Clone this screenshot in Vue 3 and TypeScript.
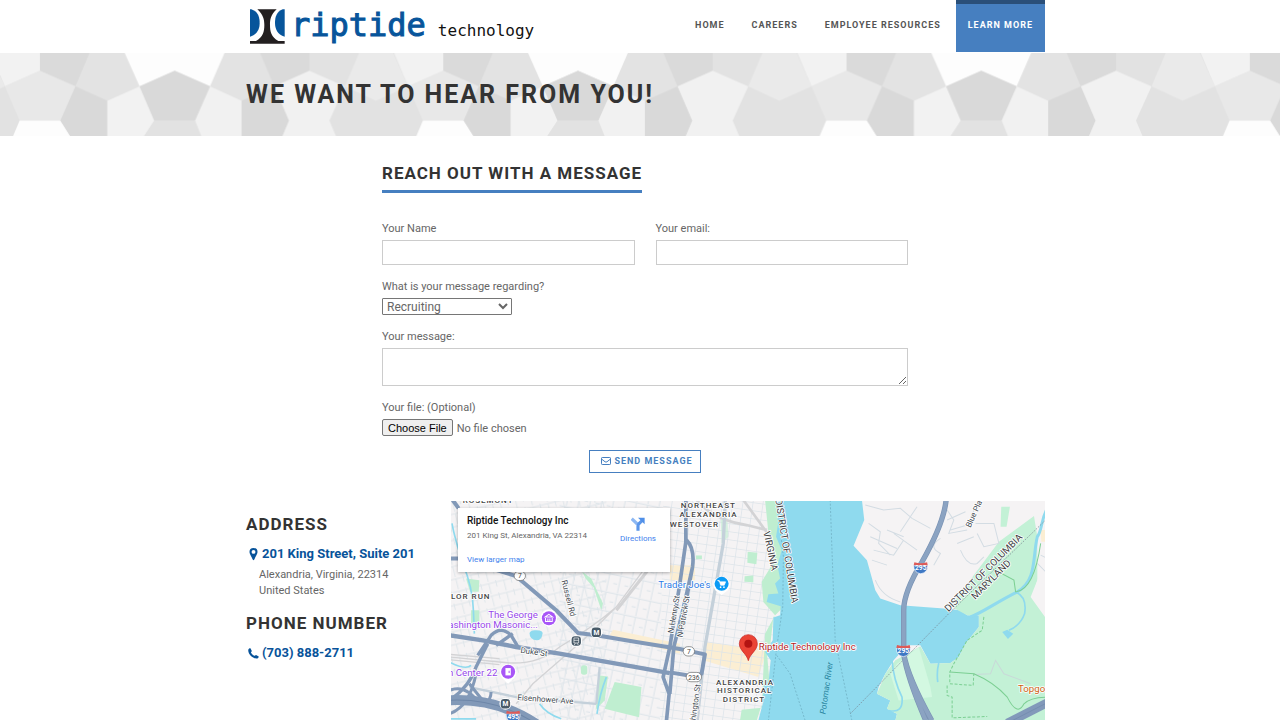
<script setup lang="ts">
import { ref } from 'vue'

interface NavItem {
  label: string
  active?: boolean
}

interface Tile {
  points: string
  fill: string
}

const navItems: NavItem[] = [
  { label: 'Home' },
  { label: 'Careers' },
  { label: 'Employee Resources' },
  { label: 'Learn More', active: true },
]

const topics: string[] = ['Recruiting', 'Teaming Opportunities', 'General']

const name = ref('')
const email = ref('')
const topic = ref('Recruiting')
const message = ref('')

const tiles: Tile[] = [
  { points: '-25,0 98,0 98,60 12,107', fill: '#f2f2f2' },
  { points: '963,0 1087,0 1087,60 1000,107', fill: '#f2f2f2' },
  { points: '98,0 222,0 185,107 98,60', fill: '#dadada' },
  { points: '222,0 303,0 342,107 263,150 185,107', fill: '#e3e3e3' },
  { points: '303,0 553,0 515,107 428,60 342,107', fill: '#fdfdfd' },
  { points: '553,0 635,0 672,107 592,150 515,107', fill: '#e3e3e3' },
  { points: '635,0 758,0 758,60 672,107', fill: '#dadada' },
  { points: '758,0 882,0 845,107 758,60', fill: '#e2e2e2' },
  { points: '882,0 961,0 1000,107 921,150 845,107', fill: '#eaeaea' },
  { points: '-106,0 -27,0 12,107 -67,150 -143,107', fill: '#eaeaea' },
  { points: '98,60 185,107 148,210 48,210 12,107', fill: '#e8e8e8' },
  { points: '48,210 148,210 175,262 30,262', fill: '#fdfdfd' },
  { points: '185,107 263,150 263,262 175,262 148,210', fill: '#d9d9d9' },
  { points: '342,107 378,210 350,262 263,262 263,150', fill: '#f2f2f2' },
  { points: '428,60 515,107 478,210 378,210 342,107', fill: '#d9d9d9' },
  { points: '378,210 478,210 495,262 350,262', fill: '#e2e2e2' },
  { points: '515,107 592,150 592,262 495,262 478,210', fill: '#f1f1f1' },
  { points: '592,150 672,107 708,210 690,262 592,262', fill: '#d9d9d9' },
  { points: '758,60 845,107 807,210 825,262 690,262 708,210 672,107', fill: '#f1f1f1' },
]
</script>

<template>
  <div class="page">
    <header class="wrap header">
      <a class="logo" href="#" aria-label="riptide technology">
        <svg class="mark" viewBox="0 0 105 105" aria-hidden="true">
          <path d="M22 1H80C62 18 60 32 60 48C60 68 64 84 85 96H104V104H0V96H18C39 84 43 68 43 48C43 32 40 18 22 1Z" fill="#231f20" />
          <path d="M0 1H4C24 8 29 24 29 42C29 60 22 76 0 83Z" fill="#07559b" />
          <path d="M104 1H98C80 8 75 24 75 42C75 60 82 76 104 83Z" fill="#07559b" />
        </svg>
        <span class="brand">riptide</span>
        <span class="sub">technology</span>
      </a>
      <nav class="nav">
        <a v-for="item in navItems" :key="item.label" href="#" :class="{ active: item.active }">{{ item.label }}</a>
      </nav>
    </header>

    <section class="hero">
      <svg class="hero-bg" aria-hidden="true">
        <defs>
          <pattern id="facets" width="988" height="262" patternUnits="userSpaceOnUse" patternTransform="scale(0.4082 0.3333) translate(0 -7)">
            <rect width="988" height="262" fill="#e2e2e2" />
            <polygon v-for="(t, i) in tiles" :key="i" :points="t.points" :fill="t.fill" />
          </pattern>
        </defs>
        <rect width="100%" height="100%" fill="url(#facets)" />
      </svg>
      <div class="wrap"><h1>We want to hear from you!</h1></div>
    </section>

    <main>
      <form class="form" @submit.prevent>
        <h2 class="form-title">Reach out with a message</h2>
        <div class="row">
          <div class="field">
            <label for="name">Your Name</label>
            <input id="name" v-model="name" class="box" type="text" />
          </div>
          <div class="field">
            <label for="email">Your email:</label>
            <input id="email" v-model="email" class="box" type="email" />
          </div>
        </div>
        <div class="field">
          <label for="topic">What is your message regarding?</label>
          <select id="topic" v-model="topic">
            <option v-for="t in topics" :key="t">{{ t }}</option>
          </select>
        </div>
        <div class="field">
          <label for="message">Your message:</label>
          <textarea id="message" v-model="message" class="box"></textarea>
        </div>
        <div class="field">
          <label for="file">Your file: (Optional)</label>
          <input id="file" type="file" />
        </div>
        <button class="send" type="submit">
          <svg viewBox="0 0 20 16" aria-hidden="true">
            <rect x="1" y="1" width="18" height="14" rx="1.5" />
            <path d="M1 4L8 9.5Q10 11 12 9.5L19 4" />
          </svg>
          Send Message
        </button>
      </form>

      <section class="wrap contact">
        <aside class="details">
          <h2>Address</h2>
          <a class="lead" href="#">
            <svg viewBox="0 0 12 16" aria-hidden="true">
              <path fill-rule="evenodd" d="M6 1A4.6 4.6 0 0 0 1.4 5.6C1.4 8 3.6 10.500 5.100 14.400Q6 16 6.900 14.400C8.400 10.500 10.600 8 10.600 5.600A4.600 4.600 0 0 0 6 1ZM6 3.400A2.200 2.200 0 1 1 6 7.800A2.200 2.200 0 1 1 6 3.400Z" />
            </svg>
            201 King Street, Suite 201
          </a>
          <p>Alexandria, Virginia, 22314<br />United States</p>
          <h2>Phone Number</h2>
          <a class="lead" href="tel:7038882711">
            <svg viewBox="0 0 12 16" aria-hidden="true">
              <path d="M0 4.500C0.200 3 1.600 2.300 2.500 2.500L4.100 5.600C4 6.500 3 6.800 3.100 7.500C3.900 9.200 5.400 10.600 7 11.200C7.800 11.200 8 10.200 8.900 10.200L12 11.900C12 13 11 14.300 9.300 14.300C4.800 14.300 -0.300 9.200 0 4.500Z" />
            </svg>
            (703) 888-2711
          </a>
        </aside>

        <div class="map">
          <svg class="map-art" viewBox="3 3 1782 657" preserveAspectRatio="xMidYMin slice" role="img" aria-label="Map of Alexandria">
            <defs>
              <pattern id="grid-town" width="30" height="24" patternUnits="userSpaceOnUse" patternTransform="rotate(8)">
                <path d="M0 0H30M0 0V24" stroke="#dbe3e9" stroke-width="4" fill="none" />
              </pattern>
              <pattern id="grid-west" width="46" height="38" patternUnits="userSpaceOnUse" patternTransform="rotate(-14)">
                <path d="M0 6H46M8 6V38M30 0V20" stroke="#dfe6ea" stroke-width="3" fill="none" />
              </pattern>
              <pattern id="grid-mid" width="34" height="56" patternUnits="userSpaceOnUse" patternTransform="rotate(12)">
                <path d="M0 4H34M6 4V56M22 30H34" stroke="#dce4e9" stroke-width="3" fill="none" />
              </pattern>
              <g id="shield">
                <path d="M-21 -8H21Q22 14 0 18Q-22 14 -21 -8Z" fill="#3f78c4" stroke="#fff" stroke-width="2" />
                <path d="M-19 -17Q0 -11 19 -17L21 -8H-21Z" fill="#de5b58" />
              </g>
              <g id="metro">
                <circle r="18" fill="#fff" />
                <rect x="-14" y="-14" width="28" height="28" rx="10" fill="#485a68" />
              </g>
            </defs>

            <rect width="1800" height="670" fill="#f5f3f4" />
            <rect width="470" height="660" fill="url(#grid-west)" />
            <rect x="330" width="340" height="660" fill="url(#grid-mid)" />
            <path d="M640 0H945L980 300L960 660H630Z" fill="#f5f3f4" />
            <path d="M490 388L690 430V460L480 405Z" fill="#fbeed3" />
            <path d="M660 195H735V240H660ZM765 425L950 450L925 530L760 480Z" fill="#fbeed3" />
            <path d="M640 0H945L980 300L960 660H630Z" fill="url(#grid-town)" />

            <g fill="#bfeed0">
              <path d="M495 545L575 560L568 650L465 625Z" />
              <path d="M450 525L475 528L465 600L438 628Z" />
              <rect x="394" y="495" width="19" height="28" rx="8" />
              <path d="M50 235L90 240L88 275H62Z" />
              <rect x="65" y="330" width="25" height="50" />
              <path d="M398 215L425 235L460 310L455 330L432 262L408 235Z" />
              <path d="M893 155L922 158L919 192L892 188ZM884 228L910 226V246L883 245Z" />
              <rect x="738" y="166" width="18" height="11" />
              <path d="M945 0H985L995 120L1000 320L970 350L960 440L950 450L958 540L920 660H870L875 628L935 622L945 400L975 345L940 305L935 245L965 195Z" />
              <path d="M812 50H832L835 110L815 130Z" opacity="0.6" />
            </g>

            <!-- Potomac -->
            <path
              d="M978 0L984 70L978 110L995 150L982 195L990 235L975 250L985 280L955 282L950 305L992 318L990 345L970 352L968 420L945 455L962 480L956 540L942 555L938 610L925 660H1335L1340 640L1310 625L1320 600L1280 580L1285 560L1305 520L1330 480L1370 435H1410L1440 490L1500 488L1525 470L1545 430L1585 380V345H1550L1530 330L1480 325L1350 315L1290 295L1275 270L1250 180L1210 137L1242 60L1235 0Z"
              fill="#8fdaee"
            />

            <g transform="translate(1200)">
              <path d="M210 438L240 490L300 488L325 470L345 430L385 380V345L350 345L300 318L445 125L550 48L560 110V240L540 290L590 360V660H135L140 640L110 625L120 600L80 580L105 520L135 480Z" fill="#c3f1d6" />
              <path d="M205 440L240 560L245 590L145 600L120 520L140 490Z" fill="#d3f8e1" />
              <path d="M452 20H478L468 80H450Z" fill="#c3f1d6" />
              <path d="M560 240L590 160V350L545 292Z" fill="#f5f3f4" />
              <path d="M570 90H590V125H572Z" fill="#fbeed3" />
              <path d="M360 350C400 335 430 310 500 275C560 240 545 170 560 110C575 90 570 60 590 25" fill="none" stroke="#8fdaee" stroke-width="9" />
              <path d="M495 275Q530 290 522 340Q510 375 475 390M125 480Q130 540 155 590Q160 640 115 630M265 488Q258 515 262 545" fill="none" stroke="#8fdaee" stroke-width="5" />
              <path d="M455 395L470 388L488 400L472 416Z" fill="#8fdaee" />
              <g fill="none" stroke="#d3dce3" stroke-width="3">
                <path d="M45 15L100 30L150 25L185 55L240 85M55 70L90 95L85 130L120 165M70 150L130 165L160 120M65 180L110 195M75 240Q95 290 150 305M130 100L200 150M150 95L200 20M110 90L160 110M270 115Q230 140 270 160L250 195M290 60L345 35M300 90L350 75L385 0M320 130L370 110M330 150Q350 200 380 190L400 170M375 70L430 70L445 130L400 140L380 100M60 110L140 145M290 30L310 60L295 100L350 90" />
                <path d="M370 522L420 520L435 480L460 520L540 550" stroke="#c9d9d8" />
                <path d="M560 190L590 220M570 165L590 175" />
              </g>
              <g fill="none" stroke="#7ccf93" stroke-width="3">
                <path d="M425 205L490 240L495 275Q550 270 570 130M298 515L370 520Q430 545 470 590Q500 650 520 610Q540 590 590 590" />
                <path d="M400 350L395 390L350 420L310 490L298 515V550L368 555L370 520M290 555V585L305 590V652L410 648" stroke-dasharray="9 5" />
              </g>
              <path d="M0 640L300 335L590 55" fill="none" stroke="#777f8c" stroke-width="2" stroke-dasharray="5 4" />
              <g fill="none">
                <path d="M287 0Q280 70 215 185Q160 275 160 330V460Q170 530 226 660M160 460Q172 530 244 660" stroke="#7b93b4" stroke-width="16" />
                <path d="M287 0Q280 70 215 185Q160 275 160 330V460Q170 530 226 660M160 460Q172 530 244 660" stroke="#8ba3c2" stroke-width="12" />
                <path d="M470 668L595 604" stroke="#8299ba" stroke-width="26" />
                <path d="M470 668L595 604" stroke="#6f88ab" stroke-width="2" />
              </g>
            </g>

            <path d="M980 0L1000 170L998 320L980 440L955 660M1140 0L1155 420L1205 660M980 465L1020 520L1065 660" fill="none" stroke="#6ba9bd" stroke-width="2" stroke-dasharray="6 5" />
            <!-- Rail -->
            <g fill="none" stroke="#d3d3d5">
              <path d="M0 470L150 485Q260 500 330 440Q430 380 500 320L640 130M0 478L150 493M0 462L150 475M200 610L250 550L400 420L510 310" stroke-width="4" />
              <path d="M500 330L650 140" stroke-width="9" />
              <path d="M740 0Q790 60 890 75L950 90M880 0L960 110" stroke-width="8" />
            </g>
            <path d="M8 70Q15 110 40 190Q70 260 72 330L75 400M0 485Q50 510 65 495M270 610Q290 640 335 655M470 530Q450 580 442 640M0 655H80" fill="none" stroke="#8fdaee" stroke-width="5" />
            <path d="M240 398Q245 388 260 390Q285 390 278 405Q275 420 262 420Q240 418 240 398Z" fill="#8fdaee" />

            <!-- Roads -->
            <g fill="none" stroke="#c4d0da">
              <path d="M826 0L820 130L790 300L765 440L742 660" stroke-width="10" />
              <path d="M60 560L200 590L440 610M440 610L450 500" stroke-width="7" />
            </g>
            <g fill="none" stroke="#8299b8" stroke-linejoin="round">
              <path d="M0 175H30L200 228L320 330L385 398L440 405L560 425L690 446L765 462L755 520L735 528L660 516" stroke-width="12" />
              <path d="M0 405L100 420L200 440L330 460L500 490L660 518" stroke-width="13" />
              <path d="M10 0L28 25" stroke-width="12" />
              <path d="M708 0V125L690 250L660 440L640 530L658 580L650 660M710 120Q735 145 728 200L690 400M728 200Q700 330 672 440L660 580" stroke-width="11" />
              <path d="M85 465L125 405Q155 375 185 405L207 442M140 435L190 400M115 430L80 500Q60 560 0 600" stroke-width="10" />
              <path d="M-10 600Q140 590 260 670" stroke-width="30" />
              <path d="M0 570Q50 550 90 610M60 550L100 600M0 640Q60 620 80 520M125 575Q125 600 105 610" stroke-width="9" />
            </g>
            <path d="M-10 600Q140 590 260 670" fill="none" stroke="#6d86a8" stroke-width="3" />

            <!-- Route markers -->
            <g class="route">
              <rect x="194" y="213" width="34" height="28" rx="14" /><text x="211" y="235">7</text>
              <rect x="700" y="439" width="34" height="28" rx="14" /><text x="717" y="461">7</text>
              <rect x="709" y="516" width="46" height="28" rx="14" /><text x="732" y="538">236</text>
            </g>
            <g class="interstate">
              <use href="#shield" x="1411" y="203" /><text x="1411" y="211">295</text>
              <use href="#shield" x="1359" y="451" /><text x="1359" y="459">295</text>
              <use href="#shield" x="191" y="648" /><text x="191" y="656">495</text>
            </g>
            <g class="metro">
              <use href="#metro" x="440" y="396" /><text x="440" y="404">M</text>
              <use href="#metro" x="168" y="610" /><text x="168" y="618">M</text>
              <use href="#metro" x="380" y="422" />
              <path d="M373 413H387V428H373ZM373 420H387M374 434L377 429M386 434L383 429" fill="none" stroke="#fff" stroke-width="2" />
            </g>

            <!-- Area names -->
            <g class="area">
              <text x="40" y="10">ROSEMONT</text>
              <text x="5" y="295">LOR RUN</text>
              <text x="693" y="25">NORTHEAST</text>
              <text x="689" y="51">ALEXANDRIA</text>
              <text x="660" y="82">WESTOVER</text>
              <g text-anchor="middle">
                <text x="885" y="553">ALEXANDRIA</text>
                <text x="884" y="579">HISTORICAL</text>
                <text x="882" y="604">DISTRICT</text>
              </g>
            </g>
            <g class="border-name">
              <text transform="translate(940 96) rotate(78)">VIRGINIA</text>
              <text transform="translate(1025 310) rotate(81)" text-anchor="end">DISTRICT OF COLUMBIA</text>
              <text transform="translate(1494 336) rotate(-45)">DISTRICT OF COLUMBIA</text>
              <text transform="translate(1574 299) rotate(-45)">MARYLAND</text>
            </g>
            <g class="street">
              <text transform="translate(212 457) rotate(8)">Duke St</text>
              <text transform="translate(203 599) rotate(4)">Eisenhower Ave</text>
              <text transform="translate(336 242) rotate(76)">Russell Rd</text>
              <text transform="translate(670 400) rotate(-80)">N Henry St</text>
              <text transform="translate(698 412) rotate(-80)">N Patrick St</text>
              <text transform="translate(752 553) rotate(-82)" text-anchor="end">hington St</text>
              <text transform="translate(1560 84) rotate(-66)">Blue Pla</text>
            </g>
            <text class="river" transform="translate(1126 642) rotate(-82)">Potomac River</text>

            <!-- Places -->
            <g class="place">
              <g fill="#9747ea" text-anchor="end">
                <text x="265" y="353">The George</text>
                <text x="265" y="383">ashington Masonic...</text>
                <text x="144" y="527">n Center 22</text>
              </g>
              <text x="782" y="264" fill="#2c7be5" text-anchor="end">Trader Joe's</text>
              <text x="1702" y="576" fill="#cb5f10">Topgo</text>
              <text class="target" x="926" y="450" fill="#b51d1d">Riptide Technology Inc</text>
            </g>
            <g>
              <path d="M298 382L280 370A25 25 0 1 1 316 370Z" fill="#fff" />
              <circle cx="298" cy="354" r="21" fill="#a855f7" />
              <path d="M287 350L298 342L309 350ZM288 353V364H308V353M295 364V355M301 364V355" fill="none" stroke="#fff" stroke-width="3" />
              <path d="M176 550L158 533A25 25 0 1 1 194 533Z" fill="#fff" />
              <circle cx="176" cy="514" r="21" fill="#a855f7" />
              <path d="M168 503H184V525H168Z" fill="#fff" /><path d="M179 511V518" stroke="#a855f7" stroke-width="3" />
              <path d="M815 284L796 270A25 25 0 1 1 834 270Z" fill="#fff" />
              <circle cx="815" cy="251" r="21" fill="#0b9bf5" />
              <path d="M803 241H808L812 255H823L827 245H810Z" fill="#fff" stroke="#fff" stroke-width="2" />
              <circle cx="812" cy="261" r="2.500" fill="#fff" /><circle cx="822" cy="261" r="2.500" fill="#fff" />
              <path d="M895 481C890 460 868 450 868 430A27 27 0 1 1 922 430C922 450 900 460 895 481Z" fill="#ea4335" stroke="#c5221f" stroke-width="2" />
              <circle cx="895" cy="430" r="12" fill="#b31412" />
            </g>
          </svg>

          <div class="card">
            <div class="card-text">
              <strong>Riptide Technology Inc</strong>
              <span>201 King St, Alexandria, VA 22314</span>
              <a href="#">View larger map</a>
            </div>
            <a class="directions" href="#">
              <svg viewBox="0 0 40 40" aria-hidden="true">
                <path d="M2 5L18 20" fill="none" stroke="#8db8f3" stroke-width="9" />
                <path d="M20 39V25Q20 22 23 19L32 10" fill="none" stroke="#5b96ea" stroke-width="9" />
                <path d="M20 2H39V21Z" fill="#4f8fe8" />
              </svg>
              Directions
            </a>
          </div>
        </div>
      </section>
    </main>
  </div>
</template>

<style>
body {
  margin: 0;
  background: #fff;
}
</style>

<style scoped>
.page {
  display: flex;
  flex-direction: column;
  min-height: 100vh;
  color: #666;
  font: 11px/16px Roboto, "Liberation Sans", sans-serif;
}

.page *,
.page *::before {
  box-sizing: border-box;
}

a {
  color: #07539a;
  text-decoration: none;
}

.wrap {
  width: 100%;
  max-width: 810px;
  margin: 0 auto;
  padding-left: 11px;
}

.header {
  display: flex;
  justify-content: space-between;
  padding-bottom: 1px;
  min-height: 53px;
}

.logo {
  display: flex;
  align-items: flex-start;
  padding: 9px 0 0 4px;
  font-family: "DejaVu Sans Mono", monospace;
}

.mark {
  width: 35px;
  height: 35px;
  margin-right: 6px;
}

.brand {
  color: #07559b;
  font-size: 32px;
  line-height: 32px;
  -webkit-text-stroke: 1px #07559b;
}

.sub {
  margin: 10px 0 0 12px;
  color: #111;
  font-size: 16px;
  line-height: 24px;
}

.nav {
  display: flex;
}

.nav a {
  padding: 16px 15px 0 12px;
  border-top: 4px solid transparent;
  color: #555;
  font-size: 9px;
  font-weight: 700;
  line-height: 10px;
  letter-spacing: 1px;
  text-transform: uppercase;
}

.nav a.active {
  padding: 16px 12px 0;
  border-color: #2a4f79;
  background: #467fc0;
  color: #fff;
}

.hero {
  position: relative;
  padding: 25px 0 24px;
}

.hero-bg {
  position: absolute;
  inset: 0;
  width: 100%;
  height: 100%;
}

.hero .wrap {
  position: relative;
}

h1,
h2 {
  margin: 0;
  color: #333;
  font-weight: 700;
  text-transform: uppercase;
}

h1 {
  font-size: 25px;
  line-height: 34px;
  letter-spacing: 2px;
}

main {
  display: flex;
  flex: 1;
  flex-direction: column;
}

.form {
  display: flex;
  flex-direction: column;
  align-items: stretch;
  width: 536px;
  max-width: 100%;
  margin: 0 auto;
  padding: 26px 0 0 10px;
}

.form-title {
  align-self: flex-start;
  margin-bottom: 27px;
  padding-bottom: 6px;
  border-bottom: 3px solid #467fc0;
  font-size: 17px;
  line-height: 22px;
  letter-spacing: 1px;
}

.row {
  display: grid;
  grid-template-columns: 1fr 1fr;
  gap: 21px;
}

.field {
  display: flex;
  flex-direction: column;
  align-items: flex-start;
  gap: 2px;
  margin-bottom: 13px;
}

.field label {
  line-height: 18px;
}

.box {
  width: 100%;
  height: 25px;
  padding: 4px;
  border: 1px solid #ccc;
  background: #fff;
  font: inherit;
}

textarea.box {
  height: 38px;
  resize: both;
}

select {
  width: 130px;
  height: 17px;
  padding: 0;
  border: 1px solid #767676;
  border-radius: 1px;
  background: #fff;
  color: #666;
  font: inherit;
  font-size: 12px;
}

input[type="file"] {
  color: #666;
  font: inherit;
}

input[type="file"]::file-selector-button {
  height: 17px;
  margin-right: 4px;
  padding: 0 5px;
  border: 1px solid #767676;
  border-radius: 2px;
  background: #efefef;
  color: #000;
  font: 11px/14px "Liberation Sans", sans-serif;
}

.send {
  display: flex;
  align-items: center;
  align-self: center;
  height: 23px;
  padding: 0 7px 0 11px;
  border: 1px solid #467fc0;
  background: #fff;
  color: #467fc0;
  font: 700 9px/12px Roboto, "Liberation Sans", sans-serif;
  letter-spacing: 1px;
  text-transform: uppercase;
}

.send svg {
  width: 10px;
  height: 8px;
  margin-right: 3px;
  fill: none;
  stroke: #467fc0;
  stroke-width: 2;
}

.contact {
  display: flex;
  flex: 1;
  margin-top: 28px;
}

.details {
  flex: 0 0 205px;
  padding-top: 13px;
}

.details h2 {
  font-size: 17px;
  line-height: 20px;
  letter-spacing: 1px;
}

.lead {
  display: flex;
  align-items: center;
  margin: 11px 0 4px 2px;
  font-size: 13px;
  font-weight: 700;
  line-height: 18px;
}

.lead svg {
  width: 11px;
  height: 14px;
  margin-right: 3px;
  fill: #07539a;
}

.details p {
  margin: 0 0 14px 13px;
}

.map {
  position: relative;
  flex: 1;
  min-height: 219px;
  overflow: hidden;
}

.map-art {
  position: absolute;
  inset: 0;
  width: 100%;
  height: 100%;
}

.map-art text {
  font-family: Roboto, "Liberation Sans", sans-serif;
  stroke: #fff;
  stroke-width: 5px;
  stroke-linejoin: round;
  paint-order: stroke;
}

.map-art .area text {
  fill: #444;
  font-size: 24px;
  font-weight: 500;
  letter-spacing: 3px;
}

.map-art .border-name text {
  fill: #3c4043;
  font-size: 29px;
}

.map-art .street text {
  fill: #454b52;
  font-size: 24px;
}

.map-art .river {
  fill: #2a86a0;
  stroke: none;
  font-size: 25px;
  font-style: italic;
}

.map-art .place text {
  font-size: 29px;
}

.map-art .route text {
  fill: #444;
  stroke: none;
  font-size: 20px;
  text-anchor: middle;
}

.route rect {
  fill: #fff;
  stroke: #666;
  stroke-width: 2;
}

.map-art .interstate text,
.map-art .metro text {
  fill: #fff;
  stroke: none;
  font-size: 20px;
  font-weight: 700;
  text-anchor: middle;
}

.card {
  position: absolute;
  top: 7px;
  left: 7px;
  display: flex;
  justify-content: space-between;
  width: 212px;
  padding: 6px 14px 5px 9px;
  background: #fff;
  box-shadow: 0 1px 3px rgba(0, 0, 0, 0.3);
  font-size: 8px;
  line-height: 14px;
}

.card a {
  color: #427fed;
}

.card-text {
  display: flex;
  flex-direction: column;
}

.card-text strong {
  color: #111;
  font-size: 10px;
  font-weight: 500;
  line-height: 14px;
}

.card-text span {
  margin: 1px 0 10px;
}

.directions {
  display: flex;
  flex-direction: column;
  align-items: center;
  padding-top: 3px;
}

.directions svg {
  width: 14px;
  height: 14px;
  margin-bottom: 1px;
}
</style>
